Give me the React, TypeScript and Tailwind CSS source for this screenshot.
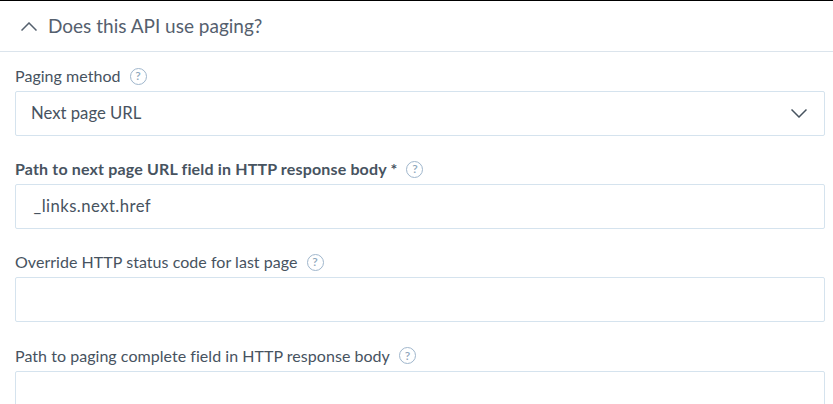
function Help() {
  return (
    <span className="ml-[9px] inline-flex h-[17px] w-[17px] items-center justify-center rounded-full border border-[#9fb6cc] text-[12px] font-semibold leading-none tracking-normal text-[#8fa6bc]">
      ?
    </span>
  );
}

function Chevron({ up }: { up?: boolean }) {
  return (
    <svg width="16" height="9" viewBox="0 0 16 9" fill="none" stroke="currentColor" strokeWidth="1.5">
      <path d={up ? 'M0.5 8.5 L8 1 L15.5 8.5' : 'M0.5 0.5 L8 8 L15.5 0.5'} />
    </svg>
  );
}

function Field({ label, bold, value, select }: { label: string; bold?: boolean; value?: string; select?: boolean }) {
  return (
    <div>
      <div className={`flex h-[20px] items-center text-[16px] text-[#47535f] ${bold ? 'font-bold tracking-[0.16px]' : 'tracking-[0.04px]'}`}>
        {label}
        <Help />
      </div>
      <div className="mt-[5px] flex h-[45px] items-center justify-between rounded-[2px] border border-[#d5e3ee] bg-white pl-[15px] pr-[17px] text-[16.7px] text-[#47535f]">
        <span className={select ? '' : 'tracking-[0.45px]'}>{value}</span>
        {select && <Chevron />}
      </div>
    </div>
  );
}

export default function App() {
  return (
    <div className="h-[404px] w-[833px] overflow-hidden bg-white font-['Lato',sans-serif]">
      <div className="h-px bg-black" />
      <div className="flex h-[51px] items-center border-b border-[#dbe4ec] pl-[21px] text-[19px] text-[#55606e]">
        <span className="mr-[11px] flex text-[#55606e]">
          <Chevron up />
        </span>
        Does this API use paging?
      </div>
      <div className="flex flex-col gap-[23.2px] pl-[15px] pr-[8px] pt-[14px]">
        <Field label="Paging method" value="Next page URL" select />
        <Field label="Path to next page URL field in HTTP response body *" bold value="&#8201;_links.next.href" />
        <Field label="Override HTTP status code for last page" />
        <Field label="Path to paging complete field in HTTP response body" />
      </div>
    </div>
  );
}
